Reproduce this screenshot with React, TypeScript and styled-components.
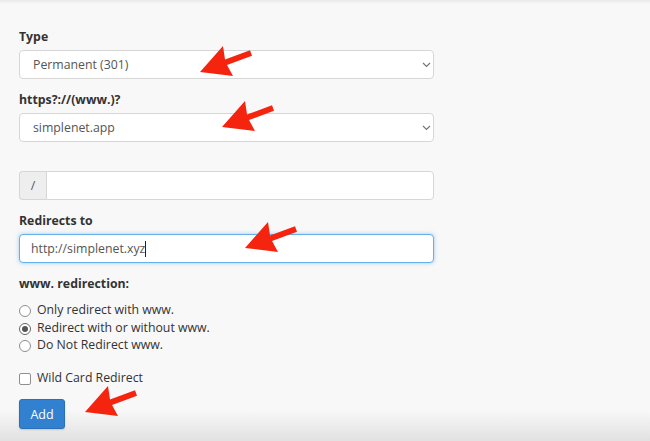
import React from "react"
import styled, { createGlobalStyle } from "styled-components"

const GlobalStyle = createGlobalStyle`
  html, body {
    margin: 0;
    padding: 0;
  }
  body {
    font-family: "Open Sans", "Liberation Sans", sans-serif;
    font-size: 12.3px;
    color: #333;
    background: #f8f8f8;
  }
`

const Page = styled.div`
  position: relative;
  box-sizing: border-box;
  min-height: 100vh;
  padding: 28px 0 0 19px;
  background: linear-gradient(
    to bottom,
    #e9e9e9 0,
    #f8f8f8 4px,
    #f8f8f8 410px,
    #e1e1e1 441px
  );
  overflow: hidden;
`

const Form = styled.form`
  width: 415px;
  display: flex;
  flex-direction: column;
`

const Group = styled.div<{ $gapTop?: number }>`
  margin-top: ${(p) => p.$gapTop ?? 0}px;
  margin-bottom: 12px;
`

const Label = styled.label`
  display: block;
  font-weight: 700;
  font-size: 12.3px;
  line-height: 18px;
  margin-bottom: 4px;
  color: #333;
`

const SelectWrap = styled.div`
  position: relative;
`

const Select = styled.select`
  appearance: none;
  -webkit-appearance: none;
  box-sizing: border-box;
  width: 100%;
  height: 29px;
  padding: 0 24px 0 13px;
  border: 1px solid #d6d6d6;
  border-radius: 4px;
  background: #fff;
  font-family: inherit;
  font-size: 12.3px;
  color: #555;
  outline: none;
`

const Chevron = styled.svg`
  position: absolute;
  right: 3px;
  top: 12px;
  pointer-events: none;
`

const InputGroup = styled.div`
  display: flex;
  height: 29px;
`

const Addon = styled.span`
  box-sizing: border-box;
  width: 27px;
  display: flex;
  align-items: center;
  justify-content: center;
  background: #eee;
  border: 1px solid #d6d6d6;
  border-right: none;
  border-radius: 4px 0 0 4px;
  color: #555;
  font-size: 12.3px;
`

const TextInput = styled.input`
  box-sizing: border-box;
  flex: 1;
  min-width: 0;
  height: 29px;
  padding: 0 11px;
  border: 1px solid #d6d6d6;
  border-radius: 0 4px 4px 0;
  background: #fff;
  font-family: inherit;
  font-size: 12.3px;
  color: #555;
  outline: none;
`

const FocusedField = styled.div`
  box-sizing: border-box;
  height: 29px;
  display: flex;
  align-items: center;
  padding: 0 11px;
  border: 1px solid #66afe9;
  border-radius: 4px;
  background: #fff;
  box-shadow: 0 0 4px rgba(102, 175, 233, 0.6);
  font-size: 12.3px;
  color: #555;
`

const Caret = styled.span`
  display: inline-block;
  width: 1px;
  height: 16px;
  background: #222;
`

const OptionList = styled.div`
  display: flex;
  flex-direction: column;
  margin-top: 8px;
`

const OptionRow = styled.label<{ $gapTop?: number }>`
  display: flex;
  align-items: center;
  height: 17.5px;
  margin-top: ${(p) => p.$gapTop ?? 0}px;
  font-size: 12.3px;
  color: #333;
`

const Radio = styled.input`
  appearance: none;
  -webkit-appearance: none;
  box-sizing: border-box;
  width: 12px;
  height: 12px;
  margin: 3px 6px 0 0;
  border: 1px solid #8f8f8f;
  border-radius: 50%;
  background: #fff;
  display: grid;
  place-items: center;

  &:checked::after {
    content: "";
    width: 6px;
    height: 6px;
    border-radius: 50%;
    background: #555;
  }
  &:checked {
    border-color: #666;
  }
`

const Checkbox = styled.input`
  appearance: none;
  -webkit-appearance: none;
  box-sizing: border-box;
  width: 12px;
  height: 12px;
  margin: 3px 6px 0 0;
  border: 1px solid #8f8f8f;
  border-radius: 2px;
  background: #fff;
`

const AddButton = styled.button`
  align-self: flex-start;
  margin-top: 13px;
  width: 46px;
  height: 30px;
  border: 1px solid #2a70b8;
  border-radius: 3px;
  background: #3281d0;
  color: #fff;
  font-family: inherit;
  font-size: 12.5px;
  box-shadow: 0 1px 2px rgba(0, 0, 0, 0.15);
`

const Arrow = styled.svg<{ $x: number; $y: number }>`
  position: absolute;
  left: ${(p) => p.$x - 2}px;
  top: ${(p) => p.$y - 28}px;
  pointer-events: none;
`

function PointerArrow({ x, y }: { x: number; y: number }) {
  return (
    <Arrow $x={x} $y={y} width="56" height="36" viewBox="0 0 56 36">
      <polygon
        points="2,28 25,2 27,15.5 52,6.2 54,11.8 29,21.1 35,32"
        fill="#f4240f"
      />
    </Arrow>
  )
}

function SelectBox({ value }: { value: string }) {
  return (
    <SelectWrap>
      <Select defaultValue={value}>
        <option>{value}</option>
      </Select>
      <Chevron width="9" height="6" viewBox="0 0 9 6">
        <path d="M1 1 L4.5 4.5 L8 1" fill="none" stroke="#777" strokeWidth="1.2" />
      </Chevron>
    </SelectWrap>
  )
}

export default function App() {
  return (
    <Page>
      <GlobalStyle />
      <Form onSubmit={(e) => e.preventDefault()}>
        <Group>
          <Label>Type</Label>
          <SelectBox value="Permanent (301)" />
        </Group>
        <Group>
          <Label>https?://(www.)?</Label>
          <SelectBox value="simplenet.app" />
        </Group>
        <Group $gapTop={17}>
          <InputGroup>
            <Addon>/</Addon>
            <TextInput defaultValue="" />
          </InputGroup>
        </Group>
        <Group>
          <Label>Redirects to</Label>
          <FocusedField>
            <span>http://simplenet.xyz</span>
            <Caret />
          </FocusedField>
        </Group>
        <div>
          <Label>www. redirection:</Label>
          <OptionList>
            <OptionRow>
              <Radio type="radio" name="www" />
              Only redirect with www.
            </OptionRow>
            <OptionRow>
              <Radio type="radio" name="www" defaultChecked />
              Redirect with or without www.
            </OptionRow>
            <OptionRow>
              <Radio type="radio" name="www" />
              Do Not Redirect www.
            </OptionRow>
            <OptionRow $gapTop={15}>
              <Checkbox type="checkbox" />
              Wild Card Redirect
            </OptionRow>
          </OptionList>
        </div>
        <AddButton type="submit">Add</AddButton>
      </Form>
      <PointerArrow x={200} y={72} />
      <PointerArrow x={222} y={127} />
      <PointerArrow x={245} y={248} />
      <PointerArrow x={85} y={412} />
    </Page>
  )
}
